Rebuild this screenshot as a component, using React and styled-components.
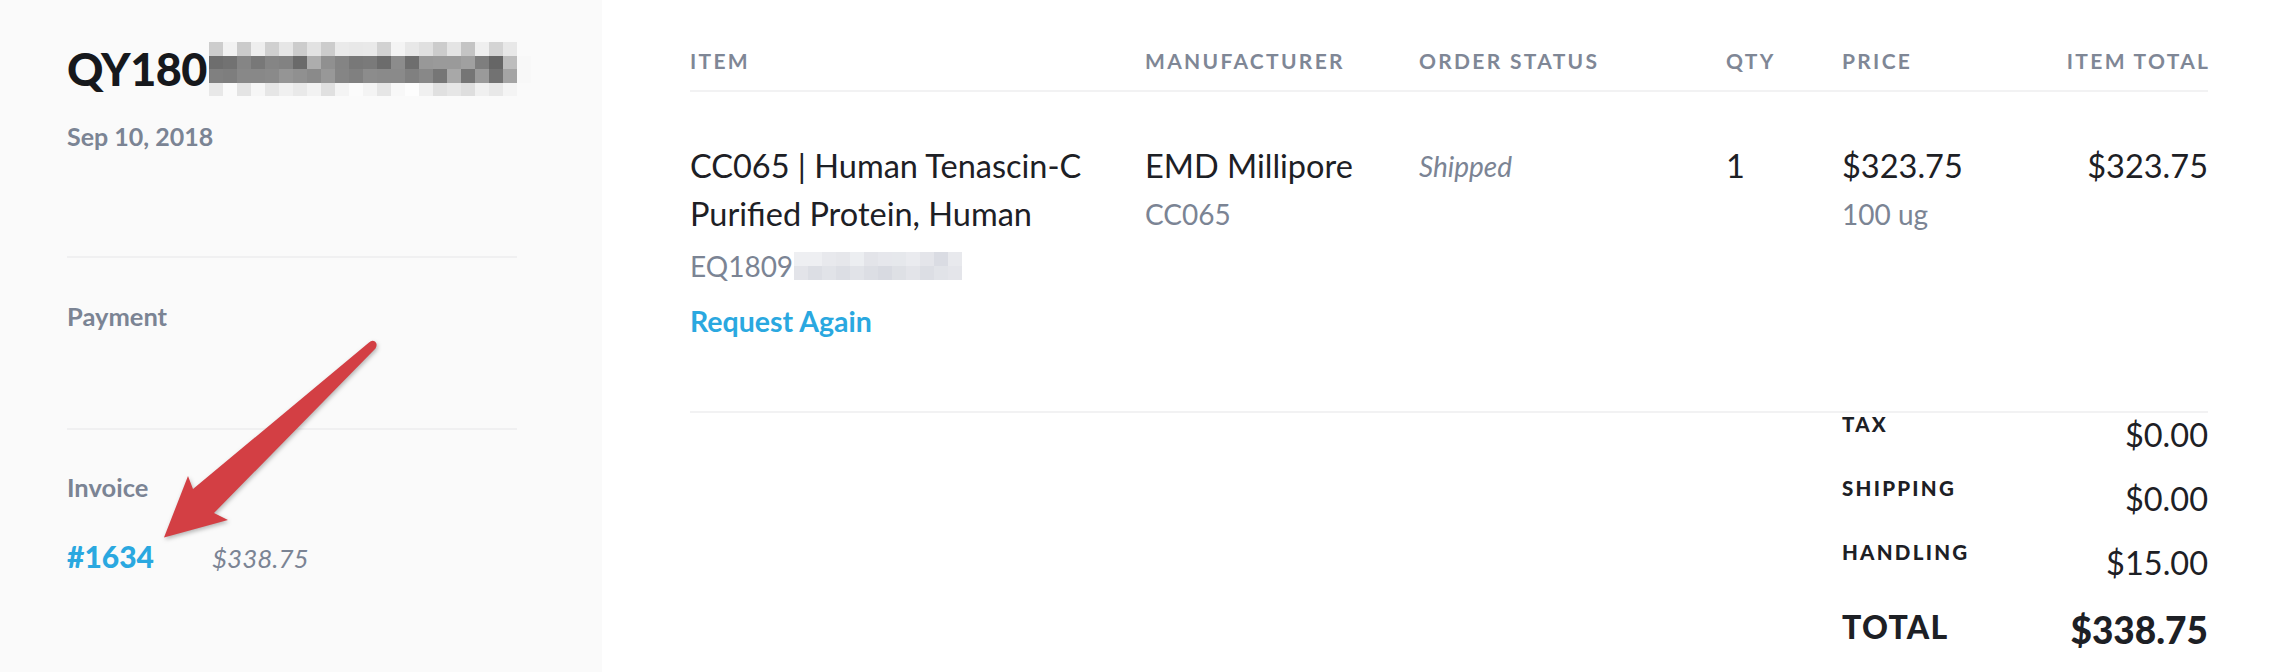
import React from "react";
import styled, { createGlobalStyle } from "styled-components";

const Global = createGlobalStyle`
  html, body { margin: 0; padding: 0; background: #ffffff; }
  body { font-family: "Lato", "Noto Sans", sans-serif; color: #1f2227; -webkit-font-smoothing: antialiased; }
  * { box-sizing: border-box; }
`;

const C = {
  dark: "#1d2025",
  grey: "#7b8494",
  head: "#7f8796",
  blue: "#2aa8e0",
  line: "#f2f2f3",
  side: "#fafafa",
  red: "#d33f44",
};

const Page = styled.div`
  position: relative;
  display: flex;
  width: 2282px;
  height: 672px;
  overflow: hidden;
`;

const Sidebar = styled.aside`
  width: 602px;
  flex: 0 0 602px;
  background: ${C.side};
  padding: 41px 85px 0 67px;
  display: flex;
  flex-direction: column;
`;

const TitleRow = styled.div`
  display: flex;
  align-items: center;
  height: 56px;
`;

const Title = styled.h1`
  margin: 0;
  font-size: 45px;
  line-height: 56px;
  font-weight: 900;
  color: #16181c;
  letter-spacing: -0.5px;
`;

const Mosaic = styled.div`
  display: grid;
  grid-template-columns: repeat(${(p) => p.$cols}, ${(p) => p.$size}px);
  grid-auto-rows: ${(p) => p.$row}px;
  margin-left: ${(p) => p.$gap || 0}px;
`;

const Cell = styled.span`
  background: ${(p) => p.$shade};
`;

const DateText = styled.div`
  margin-top: 21px;
  font-size: 25px;
  line-height: 36px;
  font-weight: 700;
  color: ${C.grey};
`;

const SideDivider = styled.hr`
  margin: ${(p) => p.$top}px 0 0;
  border: 0;
  height: 2px;
  background: #f0f0f1;
`;

const SideLabel = styled.div`
  margin-top: ${(p) => p.$top}px;
  font-size: 25.5px;
  line-height: 36px;
  font-weight: 700;
  color: ${C.grey};
`;

const InvoiceRow = styled.div`
  margin-top: 31px;
  display: flex;
  align-items: baseline;
`;

const InvoiceLink = styled.a`
  width: 145px;
  font-size: 30px;
  line-height: 40px;
  font-weight: 900;
  color: ${C.blue};
  text-decoration: none;
`;

const InvoiceAmount = styled.span`
  font-size: 26px;
  font-style: italic;
  color: ${C.grey};
`;

const Main = styled.main`
  flex: 1;
  padding: 46px 74px 0 88px;
  display: flex;
  flex-direction: column;
`;

const Grid = styled.div`
  display: grid;
  grid-template-columns: 455px 274px 307px 116px 1fr 1fr;
`;

const HeadRow = styled(Grid)`
  padding-bottom: 14px;
  border-bottom: 2px solid ${C.line};
`;

const HeadCell = styled.div`
  font-size: 21px;
  line-height: 30px;
  font-weight: 700;
  letter-spacing: 0.11em;
  color: ${C.head};
  text-align: ${(p) => (p.$right ? "right" : "left")};
  ${(p) => (p.$right ? "margin-right: -0.11em;" : "")}
`;

const ItemRow = styled(Grid)`
  padding: 50px 0 70px;
  border-bottom: 2px solid ${C.line};
`;

const Col = styled.div`
  display: flex;
  flex-direction: column;
  align-items: ${(p) => (p.$right ? "flex-end" : "flex-start")};
`;

const Primary = styled.div`
  font-size: 32.5px;
  line-height: 48px;
  color: ${C.dark};
`;

const Secondary = styled.div`
  font-size: 28px;
  line-height: 48px;
  color: ${C.grey};
`;

const Status = styled.div`
  font-size: 28px;
  line-height: 48px;
  font-style: italic;
  color: ${C.grey};
`;

const RefRow = styled.div`
  margin-top: 8px;
  display: flex;
  align-items: center;
  height: 40px;
  font-size: 28px;
  color: ${C.grey};
`;

const RequestLink = styled.a`
  margin-top: 15px;
  font-size: 28.5px;
  line-height: 40px;
  font-weight: 700;
  color: ${C.blue};
  text-decoration: none;
`;

const Totals = styled.div`
  align-self: flex-end;
  width: 366px;
  display: flex;
  flex-direction: column;
`;

const TotalLine = styled.div`
  display: flex;
  justify-content: space-between;
  align-items: flex-start;
  height: ${(p) => p.$h}px;
`;

const TotalLabel = styled.div`
  margin-top: ${(p) => (p.$big ? 4 : -1)}px;
  font-size: ${(p) => (p.$big ? 32 : 20.5)}px;
  line-height: ${(p) => (p.$big ? 36 : 24)}px;
  font-weight: 900;
  letter-spacing: ${(p) => (p.$big ? "0.04em" : "0.11em")};
  color: ${C.dark};
`;

const TotalValue = styled.div`
  font-size: ${(p) => (p.$big ? 37 : 32.5)}px;
  line-height: ${(p) => (p.$big ? 50 : 44)}px;
  font-weight: ${(p) => (p.$big ? 900 : 400)};
  color: ${C.dark};
`;

const Overlay = styled.svg`
  position: absolute;
  left: 0;
  top: 0;
  pointer-events: none;
  filter: drop-shadow(1px 2px 2px rgba(0, 0, 0, 0.28));
`;

const hx = (v) => `#${v}${v}${v}`;

const titleShades = [
  ["cd", "f2", "cb", "ee", "d0", "e6", "cc", "e2", "cc", "ea", "e8", "e9", "d2", "f4", "e8", "e0", "cc", "e4", "c4", "ef", "d4", "e8", "fa"],
  ["6e", "72", "85", "78", "85", "82", "6a", "ad", "90", "84", "78", "7a", "6c", "8c", "6e", "98", "9a", "9a", "a0", "7e", "66", "bd", "f8"],
  ["80", "7e", "88", "88", "8a", "95", "90", "8a", "98", "85", "80", "8c", "8a", "8a", "80", "88", "76", "a8", "75", "9a", "72", "a4", "f8"],
  ["e8", "fa", "e4", "f6", "e6", "f0", "e9", "f2", "e0", "f4", "fb", "f4", "e6", "f8", "fd", "f0", "e0", "e6", "de", "f0", "e8", "f4", "fa"],
].map((r) => r.map(hx));

const refShades = [
  ["#eeeff2", "#eeeff2", "#e8e9ed", "#e6e7eb", "#eceef1", "#e3e4e9", "#e6e7ec", "#e6e8ec", "#eaebef", "#e4e5ea", "#dadce3", "#e8e9ed"],
  ["#e3e4e9", "#dcdee4", "#e1e3e8", "#dcdee4", "#e1e3e8", "#dcdee4", "#d8dae1", "#dee0e5", "#e3e4e9", "#dcdee4", "#e1e3e8", "#e4e5ea"],
];

function Pixelated({ shades, size, row, gap }) {
  return (
    <Mosaic $cols={shades[0].length} $size={size} $row={row} $gap={gap}>
      {shades.flatMap((r, i) => r.map((s, j) => <Cell key={`${i}-${j}`} $shade={s} />))}
    </Mosaic>
  );
}

export default function App() {
  return (
    <>
      <Global />
      <Page>
        <Sidebar>
          <TitleRow>
            <Title>QY180</Title>
            <Pixelated shades={titleShades} size={14} row={13.5} gap={2} />
          </TitleRow>
          <DateText>Sep 10, 2018</DateText>
          <SideDivider $top={102} />
          <SideLabel $top={40}>Payment</SideLabel>
          <SideDivider $top={94} />
          <SideLabel $top={39}>Invoice</SideLabel>
          <InvoiceRow>
            <InvoiceLink href="#">#1634</InvoiceLink>
            <InvoiceAmount>$338.75</InvoiceAmount>
          </InvoiceRow>
        </Sidebar>
        <Main>
          <HeadRow>
            <HeadCell>ITEM</HeadCell>
            <HeadCell>MANUFACTURER</HeadCell>
            <HeadCell>ORDER STATUS</HeadCell>
            <HeadCell>QTY</HeadCell>
            <HeadCell>PRICE</HeadCell>
            <HeadCell $right>ITEM TOTAL</HeadCell>
          </HeadRow>
          <ItemRow>
            <Col>
              <Primary>CC065 | Human Tenascin-C</Primary>
              <Primary>Purified Protein, Human</Primary>
              <RefRow>
                EQ1809
                <Pixelated shades={refShades} size={14} row={14} gap={1} />
              </RefRow>
              <RequestLink href="#">Request Again</RequestLink>
            </Col>
            <Col>
              <Primary>EMD Millipore</Primary>
              <Secondary>CC065</Secondary>
            </Col>
            <Col>
              <Status>Shipped</Status>
            </Col>
            <Col>
              <Primary>1</Primary>
            </Col>
            <Col>
              <Primary>$323.75</Primary>
              <Secondary>100 ug</Secondary>
            </Col>
            <Col $right>
              <Primary>$323.75</Primary>
            </Col>
          </ItemRow>
          <Totals>
            <TotalLine $h={64}>
              <TotalLabel>TAX</TotalLabel>
              <TotalValue>$0.00</TotalValue>
            </TotalLine>
            <TotalLine $h={64}>
              <TotalLabel>SHIPPING</TotalLabel>
              <TotalValue>$0.00</TotalValue>
            </TotalLine>
            <TotalLine $h={64}>
              <TotalLabel>HANDLING</TotalLabel>
              <TotalValue>$15.00</TotalValue>
            </TotalLine>
            <TotalLine $h={64}>
              <TotalLabel $big>TOTAL</TotalLabel>
              <TotalValue $big>$338.75</TotalValue>
            </TotalLine>
          </Totals>
        </Main>
        <Overlay width="2282" height="672" viewBox="0 0 2282 672">
          <path
            d="M369 342.5 L193 489 L188 476 L164 537.5 L228 520 L214 513 L375.5 348.5 Q378 344 375 341.5 Q372 339.5 369 342.5 Z"
            fill={C.red}
          />
        </Overlay>
      </Page>
    </>
  );
}
